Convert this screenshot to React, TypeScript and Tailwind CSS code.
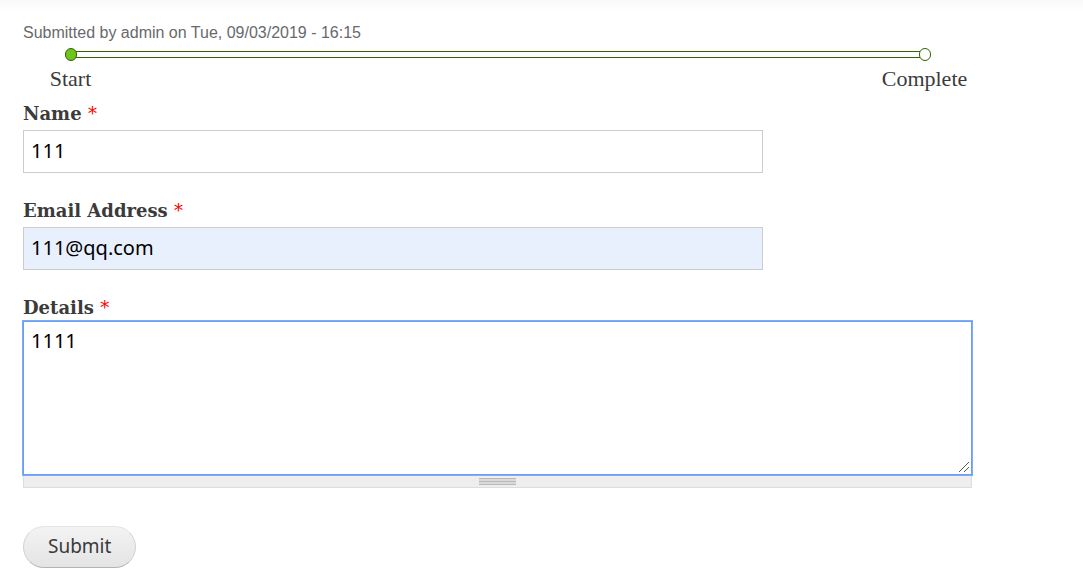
import type { ReactNode } from 'react';

const inputClass =
  'block h-[43px] w-[78%] border border-[#cccccc] px-[7px] pb-[3px] font-["Noto_Sans","Open_Sans",sans-serif] text-[20px] leading-6 text-black outline-none';

function FieldLabel({ htmlFor, children }: { htmlFor: string; children: ReactNode }) {
  return (
    <label htmlFor={htmlFor} className="block font-['DejaVu_Serif',serif] text-[18px] leading-6 font-bold">
      {children} <span className="font-normal text-[#ff0000]">*</span>
    </label>
  );
}

function Progress() {
  return (
    <div>
      <div className="flex h-[13px] items-center pr-[41px] pl-[42px]">
        <span className="h-[13px] w-3 shrink-0 rounded-full border border-[#346204] bg-[#70c41c]" />
        <span className="-mx-px h-[7px] grow border-y border-[#346204]" />
        <span className="h-[13px] w-3 shrink-0 rounded-full border border-[#346204] bg-white" />
      </div>
      <ol className="mt-1 flex justify-between font-['Liberation_Serif',serif] text-[22px] leading-7">
        <li className="flex w-[95px] justify-center">Start</li>
        <li className="flex w-[95px] justify-center">Complete</li>
      </ol>
    </div>
  );
}

export default function App() {
  return (
    <div className="bg-white bg-linear-to-b from-[#f9f9f9] to-white to-[12px] pt-[21px] pr-[111px] pb-3 pl-[23px] text-[#3b3b3b]">
      <p className="font-['Liberation_Sans',sans-serif] text-[16px] leading-6 text-[#68696b]">
        Submitted by admin on Tue, 09/03/2019 - 16:15
      </p>
      <div className="mt-[3px]">
        <Progress />
      </div>
      <form className="mt-[9px] flex flex-col gap-[26px]" onSubmit={(event) => event.preventDefault()}>
        <div>
          <FieldLabel htmlFor="name">Name</FieldLabel>
          <div className="mt-1">
            <input id="name" type="text" defaultValue="111" className={`${inputClass} bg-white`} />
          </div>
        </div>
        <div>
          <FieldLabel htmlFor="email">Email Address</FieldLabel>
          <div className="mt-1">
            <input id="email" type="email" defaultValue="111@qq.com" className={`${inputClass} bg-[#e8f0fe]`} />
          </div>
        </div>
        <div>
          <FieldLabel htmlFor="details">Details</FieldLabel>
          <div className="relative mt-px">
            <textarea
              id="details"
              defaultValue="1111"
              className="block h-[154px] w-full resize-none border border-[#6b9df0] bg-white px-[7px] py-[7px] font-['Noto_Sans','Open_Sans',sans-serif] text-[20px] leading-6 text-black outline outline-[#7dacfb]"
            />
            <svg
              className="pointer-events-none absolute right-[3px] bottom-[3px]"
              width="10"
              height="10"
              viewBox="0 0 10 10"
              aria-hidden="true"
            >
              <path d="M0 10 10 0M5 10l5-5" stroke="#555555" />
            </svg>
          </div>
          <div className="flex h-[13px] items-center justify-center border border-t-0 border-[#dddddd] bg-[#eeeeee]">
            <svg width="37" height="7" viewBox="0 0 37 7" shapeRendering="crispEdges" aria-hidden="true">
              <rect width="37" height="7" fill="#dadada" />
              <path d="M0 .5h37M0 3.5h37M0 6.5h37" stroke="#b9b9b9" />
            </svg>
          </div>
        </div>
        <div className="mt-3">
          <button
            type="submit"
            className="block h-[42px] rounded-full border border-[#e4e4e4] border-x-[#d2d2d2] border-b-[#b4b4b4] bg-linear-to-b from-[#f3f3f3] to-[#e4e4e4] px-6 pb-[2px] font-['Noto_Sans','Open_Sans',sans-serif] text-[19px] leading-6 text-[#3a3a3a]"
          >
            Submit
          </button>
        </div>
      </form>
    </div>
  );
}
